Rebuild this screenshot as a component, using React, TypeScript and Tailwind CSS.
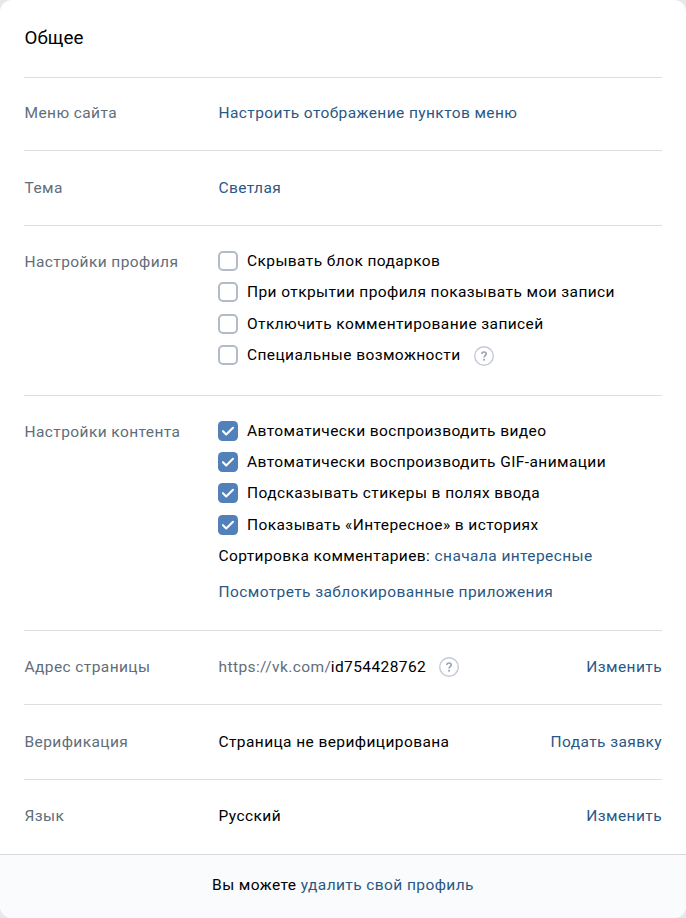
import React from 'react';

const Check = ({ on, label, children }: { on?: boolean; label: string; children?: React.ReactNode }) => (
  <div className="flex h-[31.3px] items-center whitespace-nowrap">
    {on ? (
      <svg className="mr-[9px] h-5 w-5 shrink-0" viewBox="0 0 20 20" fill="none">
        <rect width="20" height="20" rx="4.5" fill="#5181b8" />
        <path d="M5 10.2l3.2 3.2L15 6.8" stroke="#fff" strokeWidth="2.1" strokeLinecap="round" strokeLinejoin="round" />
      </svg>
    ) : (
      <span className="mr-[9px] h-5 w-5 shrink-0 rounded-[5px] border-2 border-[#b4bbc8] bg-white" />
    )}
    <span>{label}</span>
    {children}
  </div>
);

const Help = ({ className }: { className: string }) => (
  <svg className={`h-5 w-5 shrink-0 ${className}`} viewBox="0 0 20 20" fill="none">
    <circle cx="10" cy="10" r="9.3" stroke="#c3cad8" strokeWidth="1.4" />
    <path d="M7.8 8.1c0-1.3.9-2.1 2.2-2.1s2.2.8 2.2 2c0 1.7-2.1 1.7-2.1 3.5" stroke="#99a2b5" strokeWidth="1.6" />
    <rect x="9.2" y="12.8" width="1.8" height="1.8" fill="#99a2b5" />
  </svg>
);

const Row = ({ label, className, children }: { label: string; className: string; children: React.ReactNode }) => (
  <div className={`flex border-t border-[#dcdee0] leading-5 ${className}`}>
    <div className="w-[194px] shrink-0 pl-[0.5px] text-[#626d7a]">{label}</div>
    <div className="min-w-0 flex-1">{children}</div>
  </div>
);

export default function App() {
  return (
    <div className="h-[918px] w-[686px] bg-[#e6e8eb]">
      <div className="flex h-full flex-col overflow-hidden rounded-xl bg-white font-[Roboto,sans-serif] text-[15.5px] tracking-[0.41px] text-black">
        <div className="flex-1 px-6">
          <h1 className="h-[77px] pt-[26px] pl-[0.5px] text-[18.75px] leading-6 tracking-[0.05px]">Общее</h1>
          <Row label="Меню сайта" className="h-[73px] pt-[25px]"><span className="pl-[0.5px] text-[#2a5885]">Настроить отображение пунктов меню</span></Row>
          <Row label="Тема" className="h-[75px] pt-[27px]"><span className="pl-[0.5px] text-[#2a5885]">Светлая</span></Row>
          <Row label="Настройки профиля" className="h-[170px] pt-[26px]">
            <div className="-mt-[6.7px]">
              <Check label="Скрывать блок подарков" />
              <Check label="При открытии профиля показывать мои записи" />
              <Check label="Отключить комментирование записей" />
              <Check label="Специальные возможности"><Help className="ml-[13px] mt-[2px]" /></Check>
            </div>
          </Row>
          <Row label="Настройки контента" className="h-[235px] pt-[26px]">
            <div className="-mt-[6.8px]">
              <Check on label="Автоматически воспроизводить видео" />
              <Check on label="Автоматически воспроизводить GIF-анимации" />
              <Check on label="Подсказывать стикеры в полях ввода" />
              <Check on label="Показывать «Интересное» в историях" />
              <div className="h-[36px] pt-[5.6px] pl-[0.5px]">Сортировка комментариев: <span className="text-[#2a5885]">сначала интересные</span></div>
              <div className="pt-[5.6px] pl-[0.5px] text-[#2a5885]">Посмотреть заблокированные приложения</div>
            </div>
          </Row>
          <Row label="Адрес страницы" className="h-[74px] pt-[26px]">
            <div className="flex items-center pl-[0.5px]"><span className="text-[#626d7a]">https://vk.com/</span><span className="-ml-[0.5px]">id754428762</span><Help className="ml-[12.5px]" /><span className="ml-auto text-[#2a5885]">Изменить</span></div>
          </Row>
          <Row label="Верификация" className="h-[75px] pt-[27px]">
            <div className="flex justify-between pl-[0.5px]"><span>Страница не верифицирована</span><span className="text-[#2a5885]">Подать заявку</span></div>
          </Row>
          <Row label="Язык" className="h-[75px] pt-[26px]">
            <div className="flex justify-between pl-[0.5px]"><span>Русский</span><span className="text-[#2a5885]">Изменить</span></div>
          </Row>
        </div>
        <div className="h-16 border-t border-[#d7d9dc] bg-[#fafbfc] pt-5 text-center leading-5">
          Вы можете <span className="text-[#2a5885]">удалить свой профиль</span>
        </div>
      </div>
    </div>
  );
}
